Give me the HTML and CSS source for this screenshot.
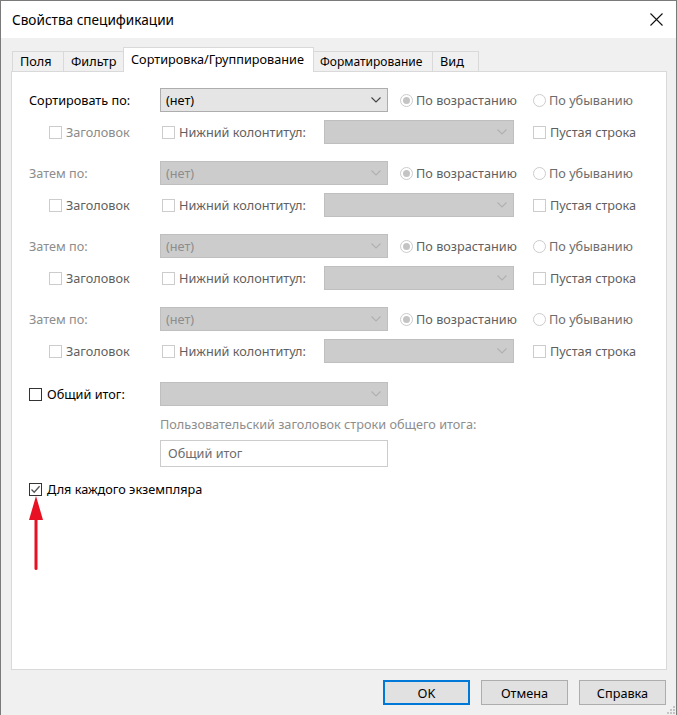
FILE: index.html
```html
<!DOCTYPE html>
<html lang="ru">
<head>
<meta charset="utf-8">
<title>Свойства спецификации</title>
<link rel="stylesheet" href="styles.css">
</head>
<body>
<div class="window">
  <div class="titlebar">
    <span class="title">Свойства спецификации</span>
    <svg class="close" width="13" height="13" viewBox="0 0 13 13"><path d="M0.5 0.5 L12.5 12.5 M12.5 0.5 L0.5 12.5" stroke="#111" stroke-width="1.1" fill="none"/></svg>
  </div>

  <div class="tabs">
    <div class="tab w-fields">Поля</div>
    <div class="tab w-filter">Фильтр</div>
    <div class="tab tab-active w-sort">Сортировка/Группирование</div>
    <div class="tab w-format">Форматирование</div>
    <div class="tab w-view">Вид</div>
  </div>

  <div class="panel">
    <div class="group">
      <div class="row-a">
        <div class="label">Сортировать по:</div>
        <div class="select select-on"><span>(нет)</span><svg class="chev" width="10" height="6" viewBox="0 0 10 6"><polyline points="0.5,0.5 5,5 9.5,0.5" fill="none" stroke="#444" stroke-width="1.1"/></svg></div>
        <div class="radio w-radio1"><span class="dot dot-on"></span><span class="t-dim">По возрастанию</span></div>
        <div class="radio"><span class="dot"></span><span class="t-dim2">По убыванию</span></div>
      </div>
      <div class="row-b">
        <div class="check w-c1"><span class="box"></span><span class="t-light">Заголовок</span></div>
        <div class="check w-c2"><span class="box"></span><span class="t-dim">Нижний колонтитул:</span></div>
        <div class="select select-off small"><span></span><svg class="chev" width="10" height="6" viewBox="0 0 10 6"><polyline points="0.5,0.5 5,5 9.5,0.5" fill="none" stroke="#b0b0b0" stroke-width="1.1"/></svg></div>
        <div class="check c3"><span class="box"></span><span class="t-dim">Пустая строка</span></div>
      </div>
    </div>

    <div class="group">
      <div class="row-a">
        <div class="label t-off">Затем по:</div>
        <div class="select select-off"><span class="t-off">(нет)</span><svg class="chev" width="10" height="6" viewBox="0 0 10 6"><polyline points="0.5,0.5 5,5 9.5,0.5" fill="none" stroke="#b0b0b0" stroke-width="1.1"/></svg></div>
        <div class="radio w-radio1"><span class="dot dot-on"></span><span class="t-dim">По возрастанию</span></div>
        <div class="radio"><span class="dot"></span><span class="t-dim2">По убыванию</span></div>
      </div>
      <div class="row-b">
        <div class="check w-c1"><span class="box"></span><span class="t-dim">Заголовок</span></div>
        <div class="check w-c2"><span class="box"></span><span class="t-dim">Нижний колонтитул:</span></div>
        <div class="select select-off small"><span></span><svg class="chev" width="10" height="6" viewBox="0 0 10 6"><polyline points="0.5,0.5 5,5 9.5,0.5" fill="none" stroke="#b0b0b0" stroke-width="1.1"/></svg></div>
        <div class="check c3"><span class="box"></span><span class="t-dim">Пустая строка</span></div>
      </div>
    </div>

    <div class="group">
      <div class="row-a">
        <div class="label t-off">Затем по:</div>
        <div class="select select-off"><span class="t-off">(нет)</span><svg class="chev" width="10" height="6" viewBox="0 0 10 6"><polyline points="0.5,0.5 5,5 9.5,0.5" fill="none" stroke="#b0b0b0" stroke-width="1.1"/></svg></div>
        <div class="radio w-radio1"><span class="dot dot-on"></span><span class="t-dim">По возрастанию</span></div>
        <div class="radio"><span class="dot"></span><span class="t-dim2">По убыванию</span></div>
      </div>
      <div class="row-b">
        <div class="check w-c1"><span class="box"></span><span class="t-dim">Заголовок</span></div>
        <div class="check w-c2"><span class="box"></span><span class="t-dim">Нижний колонтитул:</span></div>
        <div class="select select-off small"><span></span><svg class="chev" width="10" height="6" viewBox="0 0 10 6"><polyline points="0.5,0.5 5,5 9.5,0.5" fill="none" stroke="#b0b0b0" stroke-width="1.1"/></svg></div>
        <div class="check c3"><span class="box"></span><span class="t-dim">Пустая строка</span></div>
      </div>
    </div>

    <div class="group">
      <div class="row-a">
        <div class="label t-off">Затем по:</div>
        <div class="select select-off"><span class="t-off">(нет)</span><svg class="chev" width="10" height="6" viewBox="0 0 10 6"><polyline points="0.5,0.5 5,5 9.5,0.5" fill="none" stroke="#b0b0b0" stroke-width="1.1"/></svg></div>
        <div class="radio w-radio1"><span class="dot dot-on"></span><span class="t-dim">По возрастанию</span></div>
        <div class="radio"><span class="dot"></span><span class="t-dim2">По убыванию</span></div>
      </div>
      <div class="row-b">
        <div class="check w-c1"><span class="box"></span><span class="t-dim">Заголовок</span></div>
        <div class="check w-c2"><span class="box"></span><span class="t-dim">Нижний колонтитул:</span></div>
        <div class="select select-off small"><span></span><svg class="chev" width="10" height="6" viewBox="0 0 10 6"><polyline points="0.5,0.5 5,5 9.5,0.5" fill="none" stroke="#b0b0b0" stroke-width="1.1"/></svg></div>
        <div class="check c3"><span class="box"></span><span class="t-dim">Пустая строка</span></div>
      </div>
    </div>

    <div class="total-row">
      <div class="check label"><span class="box box-on"></span><span class="t-main">Общий итог:</span></div>
      <div class="select select-off"><span></span><svg class="chev" width="10" height="6" viewBox="0 0 10 6"><polyline points="0.5,0.5 5,5 9.5,0.5" fill="none" stroke="#b0b0b0" stroke-width="1.1"/></svg></div>
    </div>
    <div class="caption">Пользовательский заголовок строки общего итога:</div>
    <div class="textbox">Общий итог</div>

    <div class="each-row">
      <div class="check"><span class="box box-on"><svg width="11" height="11" viewBox="0 0 11 11"><polyline points="1.5,5.5 4.2,8.3 9.6,2.2" fill="none" stroke="#555" stroke-width="1.3"/></svg></span><span class="t-main">Для каждого экземпляра</span></div>
    </div>

    <svg class="arrow" width="16" height="76" viewBox="0 0 16 76"><polygon points="8,0 1,24 15,24" fill="#e81123"/><rect x="6.5" y="22" width="3" height="52" rx="1.5" fill="#e81123"/></svg>
  </div>

  <div class="buttons">
    <div class="btn btn-default">OK</div>
    <div class="btn">Отмена</div>
    <div class="btn">Справка</div>
  </div>

  <svg class="grip" width="10" height="10" viewBox="0 0 10 10"><g fill="#c4c4c4"><rect x="8" y="2" width="2" height="2"/><rect x="5" y="5" width="2" height="2"/><rect x="8" y="5" width="2" height="2"/><rect x="2" y="8" width="2" height="2"/><rect x="5" y="8" width="2" height="2"/><rect x="8" y="8" width="2" height="2"/></g></svg>
</div>
</body>
</html>
```

FILE: styles.css
```css
* { box-sizing: border-box; }

html, body {
  margin: 0;
  padding: 0;
  background: #f0f0f0;
}

body {
  font-family: "Noto Sans", "DejaVu Sans", sans-serif;
  font-size: 12.7px;
  color: #000;
}

.window {
  position: relative;
  width: 677px;
  height: 715px;
  border: 1px solid #7a7a7a;
  border-bottom: none;
  background: #f0f0f0;
  display: flex;
  flex-direction: column;
  overflow: hidden;
}

.titlebar {
  height: 37px;
  background: #fff;
  display: flex;
  align-items: center;
  justify-content: space-between;
  padding: 0 13px 0 11px;
  flex: none;
}

.title {
  font-size: 13.6px;
  color: #000;
}

.close { display: block; }

.tabs {
  display: flex;
  align-items: flex-end;
  margin: 9px 0 -1px 11px;
  height: 25px;
  flex: none;
  position: relative;
  z-index: 1;
}

.tab {
  height: 20px;
  margin-bottom: 1px;
  border: 1px solid #d9d9d9;
  border-bottom: none;
  border-right: none;
  background: #f0f0f0;
  padding-left: 7px;
  line-height: 19px;
  color: #000;
  white-space: nowrap;
}

.tab.w-view { border-right: 1px solid #d9d9d9; }

.tab-active {
  height: 25px;
  margin-bottom: 0;
  background: #fff;
  border-right: 1px solid #d9d9d9;
  line-height: 22px;
}
.tab-active + .tab { border-left: none; }

.w-fields { width: 51px; }
.w-filter { width: 60px; }
.w-sort { width: 191px; }
.w-format { width: 118px; padding-left: 6px; font-size: 12px; }
.w-view { width: 47px; }

.panel {
  position: relative;
  margin-left: 10px;
  width: 656px;
  height: 599px;
  background: #fff;
  border: 1px solid #d9d9d9;
  padding: 16px 0 0 17px;
  flex: none;
}

.group + .group { margin-top: 17px; }

.row-a, .row-b, .total-row {
  display: flex;
  align-items: center;
  height: 24px;
}

.row-b {
  margin-top: 8px;
  padding-left: 20px;
}

.label {
  width: 131px;
  flex: none;
  white-space: nowrap;
}

.select {
  width: 228px;
  height: 24px;
  flex: none;
  display: flex;
  align-items: center;
  justify-content: space-between;
  padding: 0 6px 0 5px;
  border: 1px solid #bfbfbf;
  background: #cccccc;
}

.select-on {
  background: #e5e5e5;
  border-color: #adadad;
  color: #000;
}

.select.small { width: 190px; }

.chev { display: block; }

.radio {
  display: flex;
  align-items: center;
  gap: 3px;
  white-space: nowrap;
}

.w-radio1 {
  width: 133px;
  margin-left: 12px;
  flex: none;
}

.dot {
  width: 13px;
  height: 13px;
  border-radius: 50%;
  border: 1px solid #cccccc;
  background: #fff;
  flex: none;
  display: flex;
  align-items: center;
  justify-content: center;
}

.dot-on::after {
  content: "";
  width: 7px;
  height: 7px;
  border-radius: 50%;
  background: #c4c4c4;
}

.check {
  display: flex;
  align-items: center;
  gap: 4px;
  white-space: nowrap;
}

.w-c1 { width: 113px; flex: none; }
.w-c2 { width: 162px; flex: none; }
.c3 { margin-left: 19px; }

.box {
  width: 13px;
  height: 13px;
  border: 1px solid #cccccc;
  background: #fff;
  flex: none;
  display: flex;
  align-items: center;
  justify-content: center;
}

.box-on { border-color: #333; }
.box svg { display: block; }

.t-main { color: #000; }
.t-dim { color: #5f5f5f; }
.t-dim2 { color: #6d6d6d; }
.t-light { color: #8a8a8a; }
.t-off { color: #8d8d8d; }

.total-row { margin-top: 19px; }
.total-row .check { gap: 5px; }

.caption {
  margin: 10px 0 0 131px;
  line-height: 16px;
  color: #8d8d8d;
  white-space: nowrap;
}

.textbox {
  margin: 8px 0 0 131px;
  width: 228px;
  height: 27px;
  border: 1px solid #cccccc;
  background: #fff;
  padding-left: 7px;
  line-height: 25px;
  color: #6d6d6d;
}

.each-row {
  margin-top: 14px;
  height: 16px;
  display: flex;
  align-items: center;
}
.each-row .check { gap: 5px; }

.arrow {
  position: absolute;
  left: 16px;
  top: 424px;
}

.buttons {
  display: flex;
  justify-content: flex-end;
  gap: 11px;
  margin: 10px 10px 0 0;
}

.btn {
  width: 87px;
  height: 25px;
  border: 1px solid #adadad;
  background: #e1e1e1;
  display: flex;
  align-items: center;
  justify-content: center;
  color: #000;
}

.btn-default {
  border: 2px solid #0078d7;
}

.grip {
  position: absolute;
  right: 1px;
  bottom: 1px;
}
```
